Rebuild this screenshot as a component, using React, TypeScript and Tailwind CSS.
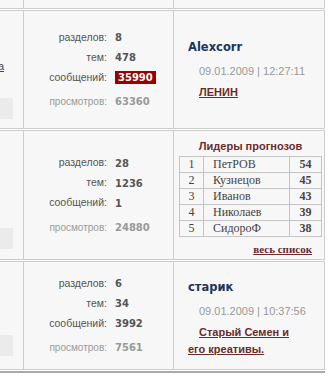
import React from "react";

const sans = "font-['Liberation_Sans',Arial,sans-serif]";
const wide = "font-['DejaVu_Sans',Verdana,sans-serif]";
const serif = "font-['Liberation_Serif','Times_New_Roman',serif]";

interface StatsProps {
  sections: string;
  topics: string;
  posts: string;
  views: string;
  hot?: boolean;
}

function StatRow({ label, children }: { label: string; children: React.ReactNode }) {
  return (
    <div className="flex h-[20px] items-center">
      <span className={`${sans} w-[83px] text-right text-[10.5px] text-[#555]`}>{label}</span>
      <span className="ml-[8px] flex items-center">{children}</span>
    </div>
  );
}

function Stats({ sections, topics, posts, views, hot }: StatsProps) {
  const value = `${wide} text-[10px] font-bold text-[#555]`;
  return (
    <div className="flex flex-col">
      <StatRow label="разделов:">
        <span className={value}>{sections}</span>
      </StatRow>
      <StatRow label="тем:">
        <span className={value}>{topics}</span>
      </StatRow>
      <StatRow label="сообщений:">
        {hot ? (
          <span className={`${wide} h-[13px] bg-[#990000] px-[3px] text-[10px] font-bold leading-[13px] text-white`}>
            {posts}
          </span>
        ) : (
          <span className={value}>{posts}</span>
        )}
      </StatRow>
      <div className="mt-[4px] flex h-[20px] items-center">
        <span className={`${sans} w-[83px] text-right text-[10px] text-[#999]`}>просмотров:</span>
        <span className={`${wide} ml-[8px] text-[10px] font-bold text-[#999]`}>{views}</span>
      </div>
    </div>
  );
}

function LastPost({ author, date, title }: { author: string; date: string; title: string }) {
  return (
    <div className="flex flex-col pl-[14px] pr-[24px]">
      <div className={`${wide} text-[11.5px] font-bold leading-[16px] text-[#1a3560]`}>{author}</div>
      <div className={`${sans} mt-[9px] whitespace-nowrap pl-[11px] text-[11px] leading-[14px] text-[#999]`}>{date}</div>
      <a
        href="#"
        className={`${sans} mt-[6px] indent-[11px] text-[11px] font-bold leading-[17px] text-[#6b2b2b] underline`}
      >
        {title}
      </a>
    </div>
  );
}

const leaders = [
  ["1", "ПетРОВ", "54"],
  ["2", "Кузнецов", "45"],
  ["3", "Иванов", "43"],
  ["4", "Николаев", "39"],
  ["5", "СидороФ", "38"],
];

function Leaders() {
  return (
    <div className="flex flex-col pl-[5px] pt-[5px]">
      <div className={`${sans} w-[143px] text-center text-[11px] font-bold leading-[14px] text-[#6b2b2b]`}>
        Лидеры прогнозов
      </div>
      <div className={`${serif} mt-[3px] w-[143px] border-l border-t border-[#c4c4c4] text-[12px] text-[#444]`}>
        {leaders.map(([n, name, score]) => (
          <div key={n} className="flex h-[16px] leading-[15px]">
            <div className="w-[24px] border-b border-r border-[#c4c4c4] text-center">{n}</div>
            <div className="w-[86px] border-b border-r border-[#c4c4c4] pl-[9px]">{name}</div>
            <div className="w-[32px] border-b border-r border-[#c4c4c4] text-center font-bold">{score}</div>
          </div>
        ))}
      </div>
      <div className="mt-[3px] w-[143px] pr-[10px] text-right leading-[14px]">
        <a href="#" className={`${serif} text-[11px] font-bold text-[#6b2b2b] underline`}>
          весь список
        </a>
      </div>
    </div>
  );
}

function Row({
  height,
  left,
  middle,
  right,
  boxGap,
}: {
  height: string;
  left?: React.ReactNode;
  middle: React.ReactNode;
  right: React.ReactNode;
  boxGap: string;
}) {
  return (
    <div className={`flex ${height} border-y border-[#cccccc] bg-[#f7f7f7]`}>
      <div className={`flex w-[24px] flex-col overflow-hidden border-r border-[#cccccc] ${boxGap}`}>
        {left}
        <div className="flex-1" />
        <div className="h-[21px] w-[13px] shrink-0 bg-[#ebebeb]" />
      </div>
      <div className="flex w-[150px] items-center border-r border-[#cccccc]">{middle}</div>
      <div className="flex w-[151px] items-center border-r border-[#cccccc]">{right}</div>
    </div>
  );
}

export default function App() {
  return (
    <div className="h-[377px] w-[334px] overflow-hidden bg-white">
      <div className="w-[325px]">
        <div className="flex h-[9px] border-b border-[#cccccc] bg-[#f7f7f7]">
          <div className="w-[24px] border-r border-[#cccccc]" />
          <div className="w-[150px] border-r border-[#cccccc]" />
          <div className="w-[151px] border-r border-[#cccccc]" />
        </div>

        <div className="mt-px">
          <Row
            height="h-[119px]"
            boxGap="pb-[9px]"
            left={
              <div className="mt-[48px] flex justify-end pr-[19px]">
                <a href="#" className={`${sans} shrink-0 whitespace-nowrap text-[11px] leading-[14px] text-[#444] underline`}>
                  Общая тема
                </a>
              </div>
            }
            middle={<Stats sections="8" topics="478" posts="35990" views="63360" hot />}
            right={<LastPost author="Alexcorr" date="09.01.2009 | 12:27:11" title="ЛЕНИН" />}
          />
        </div>

        <div className="mt-px">
          <Row
            height="h-[130px]"
            boxGap="pb-[10px]"
            middle={<Stats sections="28" topics="1236" posts="1" views="24880" />}
            right={<Leaders />}
          />
        </div>

        <div className="mt-px">
          <Row
            height="h-[109px]"
            boxGap="pb-[13px]"
            middle={<Stats sections="6" topics="34" posts="3992" views="7561" />}
            right={
              <div className="pt-[6px]">
                <LastPost author="старик" date="09.01.2009 | 10:37:56" title="Старый Семен и его креативы." />
              </div>
            }
          />
        </div>

        <div className="mt-px h-[2px] bg-[#aaaaaa]" />
      </div>
    </div>
  );
}
